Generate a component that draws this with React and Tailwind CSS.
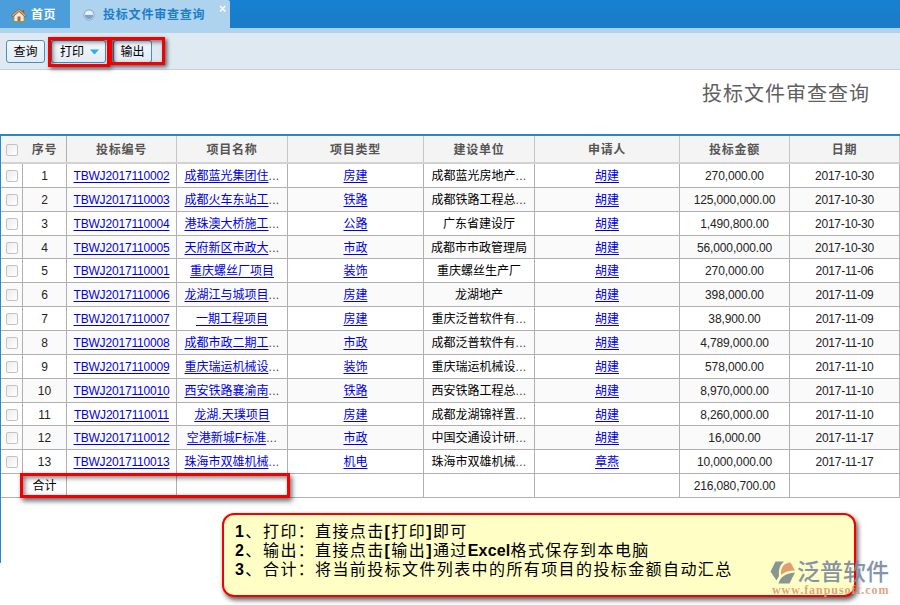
import clsx from 'clsx';

const COLS = 'grid grid-cols-[22px_44px_110px_111px_136px_111px_145px_110px_110px]';

const HEADERS = ['投标编号', '项目名称', '项目类型', '建设单位', '申请人', '投标金额', '日期'];

const ROWS = [
  ['TBWJ2017110002', '成都蓝光集团住…', '房建', '成都蓝光房地产…', '胡建', '270,000.00', '2017-10-30'],
  ['TBWJ2017110003', '成都火车东站工…', '铁路', '成都铁路工程总…', '胡建', '125,000,000.00', '2017-10-30'],
  ['TBWJ2017110004', '港珠澳大桥施工…', '公路', '广东省建设厅', '胡建', '1,490,800.00', '2017-10-30'],
  ['TBWJ2017110005', '天府新区市政大…', '市政', '成都市市政管理局', '胡建', '56,000,000.00', '2017-10-30'],
  ['TBWJ2017110001', '重庆螺丝厂项目', '装饰', '重庆螺丝生产厂', '胡建', '270,000.00', '2017-11-06'],
  ['TBWJ2017110006', '龙湖江与城项目…', '房建', '龙湖地产', '胡建', '398,000.00', '2017-11-09'],
  ['TBWJ2017110007', '一期工程项目', '房建', '重庆泛普软件有…', '胡建', '38,900.00', '2017-11-09'],
  ['TBWJ2017110008', '成都市政二期工…', '市政', '成都泛普软件有…', '胡建', '4,789,000.00', '2017-11-10'],
  ['TBWJ2017110009', '重庆瑞运机械设…', '装饰', '重庆瑞运机械设…', '胡建', '578,000.00', '2017-11-10'],
  ['TBWJ2017110010', '西安铁路襄渝南…', '铁路', '西安铁路工程总…', '胡建', '8,970,000.00', '2017-11-10'],
  ['TBWJ2017110011', '龙湖.天璞项目', '房建', '成都龙湖锦祥置…', '胡建', '8,260,000.00', '2017-11-10'],
  ['TBWJ2017110012', '空港新城F标准…', '市政', '中国交通设计研…', '胡建', '16,000.00', '2017-11-17'],
  ['TBWJ2017110013', '珠海市双雄机械…', '机电', '珠海市双雄机械…', '章燕', '10,000,000.00', '2017-11-17'],
];

const NOTES = [
  ['1', '打印', <>直接点击<b>[</b>打印<b>]</b>即可</>],
  ['2', '输出', <>直接点击<b>[</b>输出<b>]</b>通过<b className="tracking-[0.2px]">Excel</b>格式保存到本电脑</>],
  ['3', '合计', <>将当前投标文件列表中的所有项目的投标金额自动汇总</>],
];

function Checkbox() {
  return <span className="block w-3 h-3 rounded-[2px] border border-[#c2c2c2] bg-gradient-to-br from-[#ececec] to-white" />;
}

function Cell({ children, className }) {
  return (
    <div className={clsx('flex items-center justify-center overflow-hidden whitespace-nowrap border-r border-[#b0b0b0] pt-px', className)}>
      {children}
    </div>
  );
}

// The trailing ellipsis stays outside the underline
function LinkText({ text }) {
  const cut = text.endsWith('…');
  return (
    <>
      <a href="#" className="text-[#0000e6] underline underline-offset-[1.5px] decoration-1">{cut ? text.slice(0, -1) : text}</a>
      {cut && <Dots />}
    </>
  );
}

function Dots() {
  return <span className="w-[11px] text-[#444] tracking-[0.3px]">...</span>;
}

function ToolButton({ children, className }) {
  return (
    <button
      className={clsx(
        'flex items-center h-[23px] pt-px rounded-[3px] border border-[#4c8dbd] bg-gradient-to-b from-[#f4f8fc] to-[#e2ecf5] text-[12px] leading-none text-black whitespace-nowrap',
        className
      )}
    >
      {children}
    </button>
  );
}

function HomeIcon() {
  return (
    <svg width="16" height="15" viewBox="0 0 16 15">
      <path d="M3 8 8 3.500l5 4.500V13.500H3z" fill="#f3ead8" stroke="#a58c68" strokeWidth=".8" />
      <path d="M11.500 2h1.600v3.500l-1.600-1.400z" fill="#a95a2d" />
      <path d="M1 8.500 8 2l7 6.500" fill="none" stroke="#8a5c36" strokeWidth="2.3" />
      <path d="M1.500 8 8 2l6.500 6" fill="none" stroke="#e0a569" strokeWidth="1.200" />
      <path d="M6.500 8.500h3V13.500h-3z" fill="#a96b3c" />
      <path d="M.500 13.700h5M10.500 13.700h5" stroke="#6da753" strokeWidth="1.600" />
    </svg>
  );
}

function OrbIcon() {
  return (
    <svg width="12" height="12" viewBox="0 0 12 12">
      <circle cx="6" cy="6" r="5.2" fill="#cfe0f3" stroke="#93a7c8" />
      <path d="M2 6h8a4 4 0 0 1-8 0z" fill="#7f9fcd" />
      <path d="M2.500 5.500a3.500 3.500 0 0 1 7 0z" fill="#eaf3fb" />
    </svg>
  );
}

function Watermark() {
  return (
    <div className="absolute left-[770px] top-[561px] w-[124px] h-[36px] opacity-90">
      <div className="flex items-start h-[24px]">
        <svg width="26" height="24" viewBox="0 0 26 24" className="shrink-0">
          <path d="M5.500.500H14C9.500 4.500 8.500 9 9 15l-2.500 4.500L.500 10.500z" fill="#7c8a8c" />
          <path d="M11 14C10.500 6.500 14 1.500 20.500 1.500L25 9.500c-5.500 0-10 1-14 4.500z" fill="#dd9563" />
          <path d="M8.500 22.500C10 16 15 12.500 25 11.500l-5.500 11z" fill="#7c8a8c" />
        </svg>
        <span className="ml-[1px] text-[23px] leading-[22px] font-medium text-[#7988a4] whitespace-nowrap">泛普软件</span>
      </div>
      <div className="pl-[2px] font-['Liberation_Serif','DejaVu_Serif',serif] text-[12px] leading-[10px] font-bold tracking-[0.95px] text-[#dc9a75] whitespace-nowrap">
        www.fanpusoft.com
      </div>
    </div>
  );
}

export default function App() {
  return (
    <div className="relative w-[900px] h-[605px] overflow-hidden bg-white font-['Liberation_Sans','Noto_Sans_CJK_SC',sans-serif] text-[12px] text-black">
      {/* Tabs */}
      <div className="flex h-[28px] bg-gradient-to-b from-[#1681d2] to-[#1a7cc7]">
        <div className="flex items-center w-[70px] pl-[11px] pt-[2px] bg-[#4b9eda]">
          <HomeIcon />
          <span className="ml-[4px] font-bold text-white tracking-[0.5px]">首页</span>
        </div>
        <div className="relative flex items-center w-[160px] pl-[13px] pt-[2px] bg-[#aed3ee] rounded-tr-[2px]">
          <OrbIcon />
          <span className="ml-[8px] font-bold text-[#1b7ecb] tracking-[0.8px] whitespace-nowrap">投标文件审查查询</span>
          <span className="absolute right-[4px] top-[3px] text-[12px] leading-[12px] font-bold text-white">×</span>
        </div>
      </div>
      <div className="h-[5px] bg-[#aed3ee]" />

      {/* Toolbar */}
      <div className="flex items-center h-[37px] pl-[6px] bg-[#dee9f2] border-b border-[#cbd0d4]">
        <ToolButton className="w-[39px] justify-center">查询</ToolButton>
        <ToolButton className="ml-[6px] w-[55px] pl-[8px]">
          打印
          <svg width="9" height="6" viewBox="0 0 9 6" className="ml-[6px]">
            <path d="M0 .5h9L4.500 5.500z" fill="#23b1ea" />
          </svg>
        </ToolButton>
        <ToolButton className="ml-[7px] w-[39px] justify-center">输出</ToolButton>
      </div>

      {/* Title */}
      <div className="flex justify-end items-center h-[64px] pr-[30px] pb-[16px] text-[20px] tracking-[1px] text-[#5f5f5f]">
        <h1 className="leading-none">投标文件审查查询</h1>
      </div>

      {/* Grid */}
      <div className="h-[429px] border-l border-t-2 border-[#2b86cc]">
        <div className={clsx(COLS, 'h-[28px] bg-[#f4f4f4] border-b-2 border-[#d2d2d2] font-bold text-[#555] tracking-[0.7px]')}>
          <Cell className="border-r-0"><Checkbox /></Cell>
          <Cell>序号</Cell>
          {HEADERS.map((h) => <Cell key={h} className="border-[#c6c6c6]">{h}</Cell>)}
        </div>
        {ROWS.map(([code, name, type, unit, person, amount, date], i) => (
          <div key={code} className={clsx(COLS, 'h-[23.87px] border-b border-[#b0b0b0]', i % 2 && 'bg-[#fafafa]')}>
            <Cell><Checkbox /></Cell>
            <Cell className="text-[#222]">{i + 1}</Cell>
            <Cell className="tracking-[-0.18px]"><LinkText text={code} /></Cell>
            <Cell><LinkText text={name} /></Cell>
            <Cell><LinkText text={type} /></Cell>
            <Cell>
              {unit.replace('…', '')}
              {unit.endsWith('…') && <Dots />}
            </Cell>
            <Cell><LinkText text={person} /></Cell>
            <Cell className="tracking-[-0.12px] text-[#222]">{amount}</Cell>
            <Cell className="tracking-[-0.25px] text-[#222]">{date}</Cell>
          </div>
        ))}
        <div className={clsx(COLS, 'h-[23.87px] border-b border-[#b0b0b0]')}>
          <Cell className="border-r-0" />
          <Cell>合计</Cell>
          <Cell /><Cell /><Cell /><Cell /><Cell />
          <Cell className="tracking-[-0.12px] text-[#222]">216,080,700.00</Cell>
          <Cell />
        </div>
      </div>

      {/* Red callout frames */}
      <div className="absolute left-[48px] top-[37px] w-[62px] h-[30px] border-3 border-[#f40000] shadow-[2px_2px_4px_rgba(0,0,0,0.6),inset_2px_2px_4px_rgba(0,0,0,0.5)]" />
      <div className="absolute left-[109px] top-[37px] w-[56px] h-[28px] border-3 border-[#f40000] shadow-[2px_2px_4px_rgba(0,0,0,0.6),inset_2px_2px_4px_rgba(0,0,0,0.5)]" />
      <div className="absolute left-[20px] top-[473px] w-[270px] h-[25px] border-3 border-[#f40000] shadow-[2px_3px_5px_rgba(0,0,0,0.6),inset_2px_2px_5px_rgba(0,0,0,0.5)]" />

      {/* Notes */}
      <div className="absolute left-[222px] top-[513px] w-[634px] h-[84px] rounded-[12px] border-2 border-[#f40000] bg-[#ffffc5] pl-[11px] pt-[7px] shadow-[2px_3px_5px_rgba(0,0,0,0.65)]">
        {NOTES.map(([n, label, body]) => (
          <div key={n} className="flex h-[19.4px] items-center text-[16px] leading-none tracking-[1.4px] whitespace-nowrap">
            <span className="w-[28px] shrink-0"><b>{n}</b>、</span>
            <span className="w-[52px] shrink-0">{label}：</span>
            <span>{body}</span>
          </div>
        ))}
      </div>

      <Watermark />
    </div>
  );
}
